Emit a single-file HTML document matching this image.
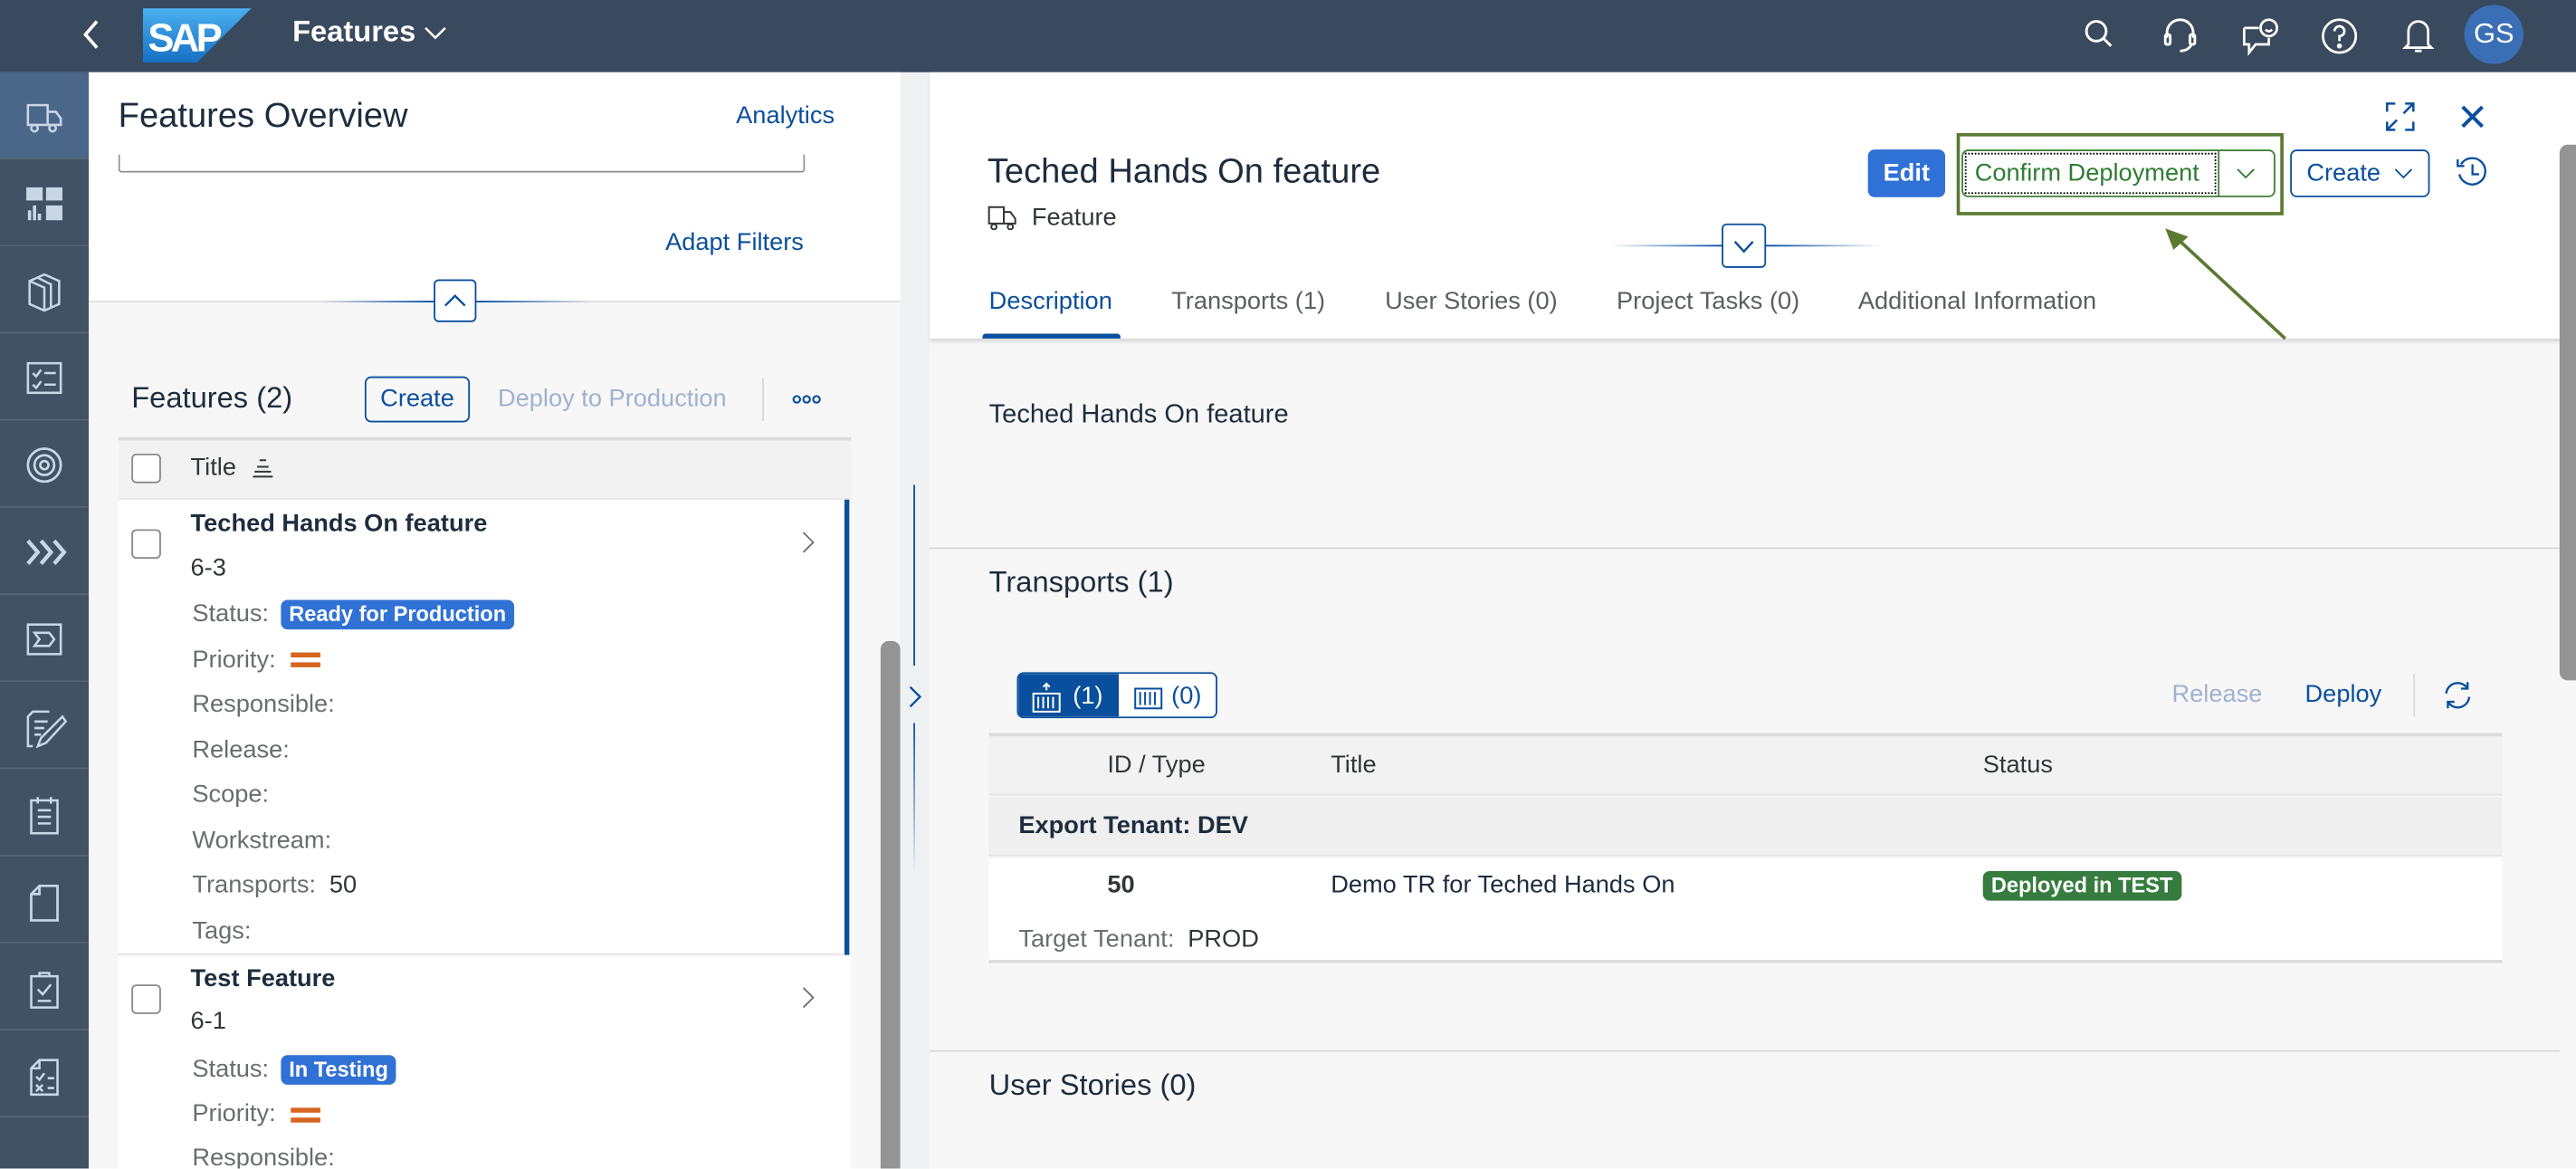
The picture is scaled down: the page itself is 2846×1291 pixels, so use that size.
<!DOCTYPE html>
<html><head><meta charset="utf-8">
<style>
*{box-sizing:border-box;margin:0;padding:0}
html,body{width:2846px;height:1290px;overflow:hidden;background:#fff}
#c{position:absolute;left:0;top:0;width:1568px;height:711px;transform:scale(1.81505);transform-origin:0 0;font-family:"Liberation Sans",sans-serif;color:#32363a;overflow:hidden}
.a{position:absolute}
.t{position:absolute;white-space:nowrap}
.nav{position:absolute;left:0;width:54px;height:53px;border-bottom:1px solid #55667a;background:#425164}
.nav svg{position:absolute;left:15px;top:15px}
.lbl{color:#6a6d70;font-size:15px}
.badge{display:inline-block;background:#3071d6;color:#fff;font-weight:bold;font-size:13px;padding:1px 5px;border-radius:4px;line-height:16px}
</style></head><body><div id="c">
<!-- shell header -->
<div class="a" style="left:0;top:0;width:1568px;height:44px;background:#394a5e"></div>
<svg class="a" style="left:48;top:10px;left:48px" width="14" height="22"><path d="M11 3 L4 11 L11 19" stroke="#fff" stroke-width="2" fill="none"/></svg>
<svg class="a" style="left:87px;top:5px" width="67" height="33"><defs><linearGradient id="g" x1="0" y1="0" x2="0" y2="1"><stop offset="0" stop-color="#4ab0ef"/><stop offset="1" stop-color="#1870c4"/></linearGradient></defs><path d="M0 0 H66 L33 33 H0Z" fill="url(#g)"/><text x="3" y="26" font-family="Liberation Sans" font-weight="bold" font-size="24" fill="#fff" letter-spacing="-2">SAP</text></svg>
<div class="t" style="left:178px;top:9px;color:#fff;font-size:18px;font-weight:bold">Features</div>
<svg class="a" style="left:258px;top:15px" width="14" height="10"><path d="M1 2 L7 8 L13 2" stroke="#fff" stroke-width="1.4" fill="none"/></svg>
<svg class="a" style="left:1268px;top:11px" width="20" height="22" fill="none" stroke="#fff" stroke-width="1.6"><circle cx="8" cy="8" r="6"/><path d="M12.5 12.5 L17 17"/></svg>
<svg class="a" style="left:1316px;top:10px" width="22" height="24" fill="none" stroke="#fff" stroke-width="1.6"><path d="M3 13 V10 A8 8 0 0 1 19 10 V13"/><rect x="2" y="11" width="3" height="6" rx="1"/><rect x="17" y="11" width="3" height="6" rx="1"/><path d="M18 17 Q16 21 11 21"/></svg>
<svg class="a" style="left:1364px;top:10px" width="24" height="24" fill="none" stroke="#fff" stroke-width="1.5"><path d="M2 7 H11 M2 7 V17 H5 V22 L9 17 H17 V13"/><circle cx="17" cy="7" r="5"/><path d="M15 8 Q17 10 19 8"/></svg>
<svg class="a" style="left:1412px;top:10px" width="24" height="24" fill="none" stroke="#fff" stroke-width="1.5"><circle cx="12" cy="12" r="10"/><path d="M9 9 A3 3 0 1 1 12 12 V15"/><circle cx="12" cy="18" r=".8" fill="#fff"/></svg>
<svg class="a" style="left:1461px;top:9px" width="22" height="26" fill="none" stroke="#fff" stroke-width="1.5"><path d="M5 18 V10 A6 6 0 0 1 17 10 V18 L19 20 H3 Z"/><path d="M9 22 H13"/></svg>
<div class="a" style="left:1500px;top:3px;width:36px;height:36px;border-radius:50%;background:#3a6fb5;color:#fff;font-size:17px;text-align:center;line-height:36px">GS</div>

<!-- side nav -->
<div class="a" style="left:0;top:44px;width:54px;height:667px;background:#425164"></div>
<div class="nav" style="top:44px;background:#4a6789"><svg width="24" height="24" fill="none" stroke="#c8d6e6" stroke-width="1.4"><path d="M2 5 H14 V17 H2Z M14 9 H19 L22 13 V17 H14"/><circle cx="6" cy="19" r="2"/><circle cx="17" cy="19" r="2"/></svg></div>
<div class="nav" style="top:97px"><svg width="24" height="24" fill="#c8d6e6"><rect x="1" y="2" width="10" height="8"/><rect x="13" y="2" width="10" height="8"/><rect x="2" y="16" width="2" height="6"/><rect x="5" y="13" width="2" height="9"/><rect x="8" y="18" width="2" height="4"/><rect x="13" y="13" width="10" height="9"/></svg></div>
<div class="nav" style="top:150px"><svg width="24" height="26" fill="none" stroke="#c8d6e6" stroke-width="1.4"><path d="M3 6 L12 2 L21 6 V20 L12 24 L3 20Z M8 4 L16 8 V22 M3 6 L12 10 V24"/></svg></div>
<div class="nav" style="top:203px"><svg width="24" height="24" fill="none" stroke="#c8d6e6" stroke-width="1.4"><rect x="2" y="3" width="20" height="18"/><path d="M5 9 L7 11 L10 7 M5 16 L7 18 L10 14 M12 9 H19 M12 16 H19"/></svg></div>
<div class="nav" style="top:256px"><svg width="24" height="24" fill="none" stroke="#c8d6e6" stroke-width="1.5"><circle cx="12" cy="12" r="10"/><circle cx="12" cy="12" r="6"/><circle cx="12" cy="12" r="2.5"/></svg></div>
<div class="nav" style="top:309px"><svg width="26" height="24" fill="none" stroke="#c8d6e6" stroke-width="2.4"><path d="M2 5 L8 12 L2 19 M10 5 L16 12 L10 19 M18 5 L24 12 L18 19"/></svg></div>
<div class="nav" style="top:362px"><svg width="24" height="24" fill="none" stroke="#c8d6e6" stroke-width="1.4"><rect x="2" y="3" width="20" height="18"/><path d="M6 8 H15 L18 12 L15 16 H6 L9 12Z"/></svg></div>
<div class="nav" style="top:415px"><svg width="26" height="26" fill="none" stroke="#c8d6e6" stroke-width="1.4"><path d="M15 3 H5 L2 6 V24 H5 M6 9 H14 M6 13 H12 M6 17 H10"/><path d="M23 6 L10 19 L8 24 L13 22 L25 9Z"/></svg></div>
<div class="nav" style="top:468px"><svg width="24" height="26" fill="none" stroke="#c8d6e6" stroke-width="1.4"><rect x="4" y="4" width="16" height="20"/><path d="M8 2 V6 M16 2 V6 M8 10 H16 M8 14 H16 M8 18 H16"/></svg></div>
<div class="nav" style="top:521px"><svg width="24" height="26" fill="none" stroke="#c8d6e6" stroke-width="1.5"><path d="M9 3 H20 V24 H4 V8Z M9 3 V8 H4"/></svg></div>
<div class="nav" style="top:574px"><svg width="24" height="26" fill="none" stroke="#c8d6e6" stroke-width="1.4"><rect x="4" y="5" width="16" height="19"/><path d="M9 5 V3 H15 V5 M8 13 L11 16 L16 10 M8 20 H16"/></svg></div>
<div class="nav" style="top:627px"><svg width="24" height="26" fill="none" stroke="#c8d6e6" stroke-width="1.4"><path d="M9 3 H20 V24 H4 V8Z M9 3 V8 H4 M7 13 L9 15 L12 11 M7 18 L11 22 M11 18 L7 22 M14 14 H18 M14 20 H18"/></svg></div>

<!-- left panel -->
<div class="a" style="left:54px;top:44px;width:494px;height:667px;background:#f7f7f7"></div>
<div class="a" style="left:54px;top:44px;width:494px;height:140px;background:#fff;border-bottom:1px solid #e0e0e0"></div>
<div class="t" style="left:72px;top:59px;font-size:21px;color:#1d2d3e">Features Overview</div>
<div class="t" style="left:448px;top:62px;font-size:15px;color:#0a4f9e">Analytics</div>
<div class="a" style="left:72px;top:94px;width:418px;height:11px;border:1px solid #8e8e8e;border-top:none;border-radius:0 0 2px 2px"></div>
<div class="t" style="left:405px;top:139px;font-size:15px;color:#0a4f9e">Adapt Filters</div>
<div class="a" style="left:195px;top:183px;width:165px;height:1px;background:linear-gradient(90deg,rgba(10,79,158,0),#0a4f9e 40%,#0a4f9e 60%,rgba(10,79,158,0))"></div>
<div class="a" style="left:264px;top:170px;width:26px;height:26px;background:#fff;border:1px solid #0a4f9e;border-radius:3px"><svg width="24" height="24"><path d="M6 15 L12 9 L18 15" stroke="#0a4f9e" stroke-width="1.3" fill="none"/></svg></div>
<div class="t" style="left:80px;top:232px;font-size:18px;color:#1d2d3e">Features (2)</div>
<div class="a" style="left:222px;top:229px;width:64px;height:28px;border:1px solid #0a4f9e;border-radius:4px;color:#0a4f9e;font-size:15px;text-align:center;line-height:26px">Create</div>
<div class="t" style="left:303px;top:234px;font-size:15px;color:#9fb1d1">Deploy to Production</div>
<div class="a" style="left:464px;top:230px;width:1px;height:26px;background:#d9d9d9"></div>
<svg class="a" style="left:481px;top:238px" width="22" height="10" fill="none" stroke="#0a4f9e" stroke-width="1.2"><circle cx="4" cy="5" r="2"/><circle cx="10" cy="5" r="2"/><circle cx="16" cy="5" r="2"/></svg>
<div class="a" style="left:72px;top:266px;width:446px;height:38px;background:#f2f2f2;border-top:2px solid #dcdcdc;border-bottom:1px solid #e5e5e5"></div>
<div class="a" style="left:80px;top:276px;width:18px;height:18px;border:1px solid #8a8a8a;border-radius:3px;background:#fff"></div>
<div class="t" style="left:116px;top:276px;font-size:15px;color:#32363a">Title</div>
<svg class="a" style="left:153px;top:278px" width="14" height="14" stroke="#32363a" stroke-width="1.1"><path d="M5 2 H9 M3.5 6 H10.5 M2 9 H12 M1 12 H13"/></svg>
<!-- row 1 -->
<div class="a" style="left:72px;top:304px;width:446px;height:277px;background:#fff;border-bottom:1px solid #e5e5e5"></div>
<div class="a" style="left:514px;top:304px;width:3px;height:277px;background:#0a4f9e"></div>
<div class="a" style="left:80px;top:322px;width:18px;height:18px;border:1px solid #8a8a8a;border-radius:3px"></div>
<svg class="a" style="left:486px;top:322px" width="12" height="16"><path d="M3 2 L9 8 L3 14" stroke="#6a6d70" fill="none"/></svg>
<div class="t" style="left:116px;top:310px;font-size:15px;font-weight:bold;color:#1d2d3e">Teched Hands On feature</div>
<div class="t" style="left:116px;top:337px;font-size:15px">6-3</div>
<div class="t lbl" style="left:117px;top:365px">Status: <span class="badge" style="margin-left:3px">Ready for Production</span></div>
<div class="t lbl" style="left:117px;top:393px">Priority:</div>
<div class="a" style="left:177px;top:397px;width:18px;height:3px;background:#d5651f"></div><div class="a" style="left:177px;top:403px;width:18px;height:3px;background:#d5651f"></div>
<div class="t lbl" style="left:117px;top:420px">Responsible:</div>
<div class="t lbl" style="left:117px;top:448px">Release:</div>
<div class="t lbl" style="left:117px;top:475px">Scope:</div>
<div class="t lbl" style="left:117px;top:503px">Workstream:</div>
<div class="t lbl" style="left:117px;top:530px">Transports: <span style="color:#32363a;margin-left:4px">50</span></div>
<div class="t lbl" style="left:117px;top:558px">Tags:</div>
<!-- row 2 -->
<div class="a" style="left:72px;top:582px;width:446px;height:129px;background:#fff"></div>
<div class="a" style="left:80px;top:599px;width:18px;height:18px;border:1px solid #8a8a8a;border-radius:3px"></div>
<svg class="a" style="left:486px;top:599px" width="12" height="16"><path d="M3 2 L9 8 L3 14" stroke="#6a6d70" fill="none"/></svg>
<div class="t" style="left:116px;top:587px;font-size:15px;font-weight:bold;color:#1d2d3e">Test Feature</div>
<div class="t" style="left:116px;top:613px;font-size:15px">6-1</div>
<div class="t lbl" style="left:117px;top:642px">Status: <span class="badge" style="margin-left:3px">In Testing</span></div>
<div class="t lbl" style="left:117px;top:669px">Priority:</div>
<div class="a" style="left:177px;top:674px;width:18px;height:3px;background:#d5651f"></div><div class="a" style="left:177px;top:680px;width:18px;height:3px;background:#d5651f"></div>
<div class="t lbl" style="left:117px;top:696px">Responsible:</div>
<!-- scrollbar + splitter -->
<div class="a" style="left:536px;top:390px;width:12px;height:321px;background:#949494;border-radius:5px 5px 0 0"></div>
<div class="a" style="left:548px;top:44px;width:18px;height:667px;background:#eef0f2"></div>
<div class="a" style="left:556px;top:295px;width:1px;height:110px;background:#0a4f9e"></div>
<div class="a" style="left:556px;top:440px;width:1px;height:90px;background:linear-gradient(#0a4f9e,rgba(10,79,158,0))"></div>
<svg class="a" style="left:552px;top:416px" width="10" height="16"><path d="M2 2 L8 8 L2 14" stroke="#0a4f9e" stroke-width="1.3" fill="none"/></svg>

<!-- right panel -->
<div class="a" style="left:566px;top:44px;width:1002px;height:667px;background:#f7f7f7"></div>
<div class="a" style="left:566px;top:44px;width:1002px;height:162px;background:#fff;box-shadow:0 2px 2px rgba(0,0,0,.12)"></div>
<svg class="a" style="left:1451px;top:61px" width="20" height="20" fill="none" stroke="#0a4f9e" stroke-width="1.4"><path d="M2 7 V2 H7 M13 2 H18 V7 M18 2 L12 8 M2 13 V18 H7 M2 18 L8 12 M13 18 H18 V13"/></svg>
<svg class="a" style="left:1497px;top:63px" width="16" height="16" stroke="#0a4f9e" stroke-width="2.2"><path d="M2 2 L14 14 M14 2 L2 14"/></svg>
<div class="t" style="left:601px;top:93px;font-size:21px;color:#1d2d3e">Teched Hands On feature</div>
<svg class="a" style="left:601px;top:124px" width="18" height="16" fill="none" stroke="#32363a" stroke-width="1.1"><path d="M1 2 H10 V12 H1Z M10 5 H14 L17 9 V12 H10"/><circle cx="4" cy="14" r="1.6"/><circle cx="14" cy="14" r="1.6"/></svg>
<div class="t" style="left:628px;top:124px;font-size:15px">Feature</div>
<div class="a" style="left:1137px;top:91px;width:47px;height:29px;background:#3071d6;border-radius:4px;color:#fff;font-weight:bold;font-size:15px;text-align:center;line-height:29px">Edit</div>
<div class="a" style="left:1191px;top:81px;width:199px;height:50px;border:2px solid #5a7a32"></div>
<div class="a" style="left:1194px;top:91px;width:191px;height:29px;border:1px solid #3f7e3a;border-radius:4px;background:#fff"></div>
<div class="a" style="left:1196px;top:93px;width:153px;height:25px;border:1px dotted #000"></div>
<div class="t" style="left:1202px;top:97px;font-size:15px;color:#2e7d32">Confirm Deployment</div>
<div class="a" style="left:1350px;top:92px;width:1px;height:27px;background:#3f7e3a"></div>
<svg class="a" style="left:1361px;top:101px" width="12" height="10"><path d="M1 2 L6 7 L11 2" stroke="#2e7d32" fill="none"/></svg>
<div class="a" style="left:1394px;top:91px;width:85px;height:29px;border:1px solid #0a4f9e;border-radius:4px"></div>
<div class="t" style="left:1404px;top:97px;font-size:15px;color:#0a4f9e">Create</div>
<svg class="a" style="left:1457px;top:101px" width="12" height="10"><path d="M1 2 L6 7 L11 2" stroke="#0a4f9e" fill="none"/></svg>
<svg class="a" style="left:1494px;top:94px" width="22" height="22" fill="none" stroke="#0a4f9e" stroke-width="1.3"><path d="M4 6 A8 8 0 1 1 3 12"/><path d="M2 3 V7 H6"/><path d="M11 6 V12 H15"/></svg>
<!-- arrow annotation -->
<svg class="a" style="left:1310px;top:135px" width="90" height="75"><path d="M81 71 L14 9" stroke="#5a7a32" stroke-width="2"/><path d="M8 4 L22 9 L13 17Z" fill="#5a7a32"/></svg>
<div class="a" style="left:980px;top:149px;width:165px;height:1px;background:linear-gradient(90deg,rgba(10,79,158,0),#0a4f9e 40%,#0a4f9e 60%,rgba(10,79,158,0))"></div>
<div class="a" style="left:1048px;top:136px;width:27px;height:27px;background:#fff;border:1px solid #0a4f9e;border-radius:3px"><svg width="25" height="25"><path d="M7 10 L12.5 16 L18 10" stroke="#0a4f9e" stroke-width="1.3" fill="none"/></svg></div>
<div class="t" style="left:602px;top:175px;font-size:15px;color:#0a4f9e">Description</div>
<div class="a" style="left:598px;top:203px;width:84px;height:3px;background:#0a4f9e;border-radius:2px 2px 0 0"></div>
<div class="t" style="left:713px;top:175px;font-size:15px;color:#5b5e62">Transports (1)</div>
<div class="t" style="left:843px;top:175px;font-size:15px;color:#5b5e62">User Stories (0)</div>
<div class="t" style="left:984px;top:175px;font-size:15px;color:#5b5e62">Project Tasks (0)</div>
<div class="t" style="left:1131px;top:175px;font-size:15px;color:#5b5e62">Additional Information</div>
<div class="t" style="left:602px;top:244px;font-size:16px;color:#1d2d3e">Teched Hands On feature</div>
<div class="a" style="left:566px;top:333px;width:992px;height:1px;background:#d9d9d9"></div>
<div class="t" style="left:602px;top:344px;font-size:18px;color:#1d2d3e">Transports (1)</div>
<div class="a" style="left:619px;top:409px;width:122px;height:28px;border:1px solid #0a4f9e;border-radius:4px;overflow:hidden;background:#fff">
 <div class="a" style="left:0;top:0;width:61px;height:26px;background:#0a4f9e"></div>
 <svg class="a" style="left:7px;top:4px" width="20" height="20" fill="none" stroke="#fff" stroke-width="1.1"><rect x="2" y="8" width="16" height="11"/><path d="M5 10 V17 M8 10 V17 M11 10 V17 M14 10 V17 M10 2 V6 M8 4 L10 2 L12 4"/></svg>
 <div class="t" style="left:33px;top:5px;color:#fff;font-size:15px">(1)</div>
 <svg class="a" style="left:69px;top:4px" width="20" height="20" fill="none" stroke="#0a4f9e" stroke-width="1.1"><rect x="2" y="5" width="16" height="12"/><path d="M5 7 V15 M8 7 V15 M11 7 V15 M14 7 V15"/></svg>
 <div class="t" style="left:93px;top:5px;color:#0a4f9e;font-size:15px">(0)</div>
</div>
<div class="t" style="left:1322px;top:414px;font-size:15px;color:#9fb1d1">Release</div>
<div class="t" style="left:1403px;top:414px;font-size:15px;color:#0a4f9e">Deploy</div>
<div class="a" style="left:1469px;top:410px;width:1px;height:26px;background:#d9d9d9"></div>
<svg class="a" style="left:1486px;top:413px" width="20" height="20" fill="none" stroke="#0a4f9e" stroke-width="1.3"><path d="M3 9 A7 7 0 0 1 16 6 M17 11 A7 7 0 0 1 4 14"/><path d="M16 2 V6 H12 M4 18 V14 H8"/></svg>
<div class="a" style="left:602px;top:446px;width:921px;height:38px;background:#f2f2f2;border-top:2px solid #dcdcdc;border-bottom:1px solid #e5e5e5"></div>
<div class="t" style="left:674px;top:457px;font-size:15px">ID / Type</div>
<div class="t" style="left:810px;top:457px;font-size:15px">Title</div>
<div class="t" style="left:1207px;top:457px;font-size:15px">Status</div>
<div class="a" style="left:602px;top:485px;width:921px;height:36px;background:#efefef;border-bottom:1px solid #e5e5e5"></div>
<div class="t" style="left:620px;top:494px;font-size:15px;font-weight:bold;color:#1d2d3e">Export Tenant: DEV</div>
<div class="a" style="left:602px;top:522px;width:921px;height:64px;background:#fff;border-bottom:2px solid #dcdcdc"></div>
<div class="t" style="left:674px;top:530px;font-size:15px;font-weight:bold">50</div>
<div class="t" style="left:810px;top:530px;font-size:15px;color:#1d2d3e">Demo TR for Teched Hands On</div>
<div class="t" style="left:1207px;top:530px;background:#367c3e;color:#fff;font-weight:bold;font-size:13px;padding:1px 5px;border-radius:4px;line-height:16px">Deployed in TEST</div>
<div class="t" style="left:620px;top:563px;font-size:15px;color:#6a6d70">Target Tenant: <span style="color:#32363a;margin-left:4px">PROD</span></div>
<div class="a" style="left:566px;top:639px;width:992px;height:1px;background:#d9d9d9"></div>
<div class="t" style="left:602px;top:650px;font-size:18px;color:#1d2d3e">User Stories (0)</div>
<div class="a" style="left:1558px;top:88px;width:10px;height:326px;background:#949494;border-radius:5px 0 0 5px"></div>
</div></body></html>
